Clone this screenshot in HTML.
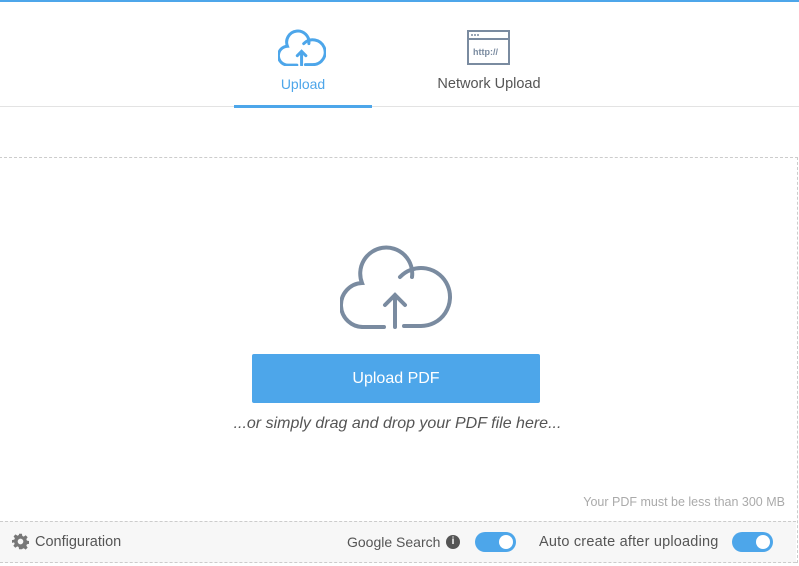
<!DOCTYPE html>
<html><head><style>
body{margin:0;width:799px;height:566px;background:#fff;font-family:"Liberation Sans",sans-serif;position:relative;overflow:hidden}
.a{position:absolute}
</style></head><body>
<div class="a" style="left:0;top:0;width:799px;height:2px;background:#4da6ea"></div>
<svg class="a" style="left:278px;top:29px" width="48" height="37" viewBox="0 0 112 86" fill="none" stroke="#4da6ea" stroke-width="7" stroke-linecap="round">
<path d="M44 84H24A22 22 0 0 1 22 40A26 26 0 1 1 72 34"/><path d="M60 34A29 29 0 1 1 81 83H64"/><path d="M55 84V52M45 62L55 52L65 62"/></svg>
<div class="a" style="left:234px;top:76px;width:138px;text-align:center;font-size:14px;color:#4da6ea">Upload</div>
<svg class="a" style="left:467px;top:30px" width="44" height="35" viewBox="0 0 44 35"><rect x="1" y="1" width="41" height="33" fill="none" stroke="#7a8ba0" stroke-width="2"/><line x1="1" y1="9" x2="42" y2="9" stroke="#7a8ba0" stroke-width="2"/><circle cx="5" cy="5" r="1" fill="#7a8ba0"/><circle cx="8" cy="5" r="1" fill="#7a8ba0"/><circle cx="11" cy="5" r="1" fill="#7a8ba0"/><text x="6" y="25" font-size="9" font-weight="bold" fill="#7a8ba0" font-family="Liberation Sans">http://</text></svg>
<div class="a" style="left:420px;top:76px;width:138px;text-align:center;font-size:14.5px;color:#555">Network Upload</div>
<div class="a" style="left:0;top:106px;width:799px;height:1px;background:#e3e3e3"></div>
<div class="a" style="left:234px;top:105px;width:138px;height:3px;background:#4da6ea"></div>
<div class="a" style="left:-1px;top:157px;width:797px;height:404px;border:1px dashed #ccc"></div>
<svg class="a" style="left:340px;top:243px" width="112" height="86" viewBox="0 0 112 86" fill="none" stroke="#7a8ba0" stroke-width="4" stroke-linecap="round">
<path d="M44 84H24A22 22 0 0 1 22 40A26 26 0 1 1 72 34"/><path d="M60 34A29 29 0 1 1 81 83H64"/><path d="M55 84V52M45 62L55 52L65 62"/></svg>
<div class="a" style="left:252px;top:354px;width:288px;height:49px;background:#4da6ea;border-radius:2px;color:#fff;font-size:16px;line-height:49px;text-align:center">Upload PDF</div>
<div class="a" style="left:0;top:415px;width:795px;text-align:center;font-size:16px;font-style:italic;color:#555">...or simply drag and drop your PDF file here...</div>
<div class="a" style="left:500px;top:495px;width:285px;text-align:right;font-size:12.5px;color:#aaa">Your PDF must be less than 300 MB</div>
<div class="a" style="left:0;top:521px;width:796px;height:40px;background:#f7f7f7;border-top:1px dashed #ccc;border-bottom:1px dashed #ccc"></div>
<svg class="a" style="left:12px;top:533px" width="17" height="17" viewBox="0 0 24 24"><path fill="#777" d="M10 1h4l.6 3.2 2 .9 2.7-1.9 2.8 2.8-1.9 2.7.9 2 3.2.6v4l-3.2.6-.9 2 1.9 2.7-2.8 2.8-2.7-1.9-2 .9L14 23h-4l-.6-3.2-2-.9-2.7 1.9-2.8-2.8 1.9-2.7-.9-2L0 14v-4l3.2-.6.9-2-1.9-2.7 2.8-2.8 2.7 1.9 2-.9zM12 8a4 4 0 1 0 0 8 4 4 0 0 0 0-8z"/></svg>
<div class="a" style="left:35px;top:534px;font-size:14.5px;color:#555">Configuration</div>
<div class="a" style="left:347px;top:534px;font-size:14px;color:#555">Google Search</div>
<div class="a" style="left:446px;top:535px;width:14px;height:14px;border-radius:50%;background:#555;color:#fff;font-size:10px;font-weight:bold;text-align:center;line-height:14px">i</div>
<div class="a" style="left:475px;top:532px;width:41px;height:20px;border-radius:10px;background:#4da6ea"><div style="position:absolute;right:3px;top:3px;width:14px;height:14px;border-radius:50%;background:#fff"></div></div>
<div class="a" style="left:539px;top:534px;font-size:14.5px;color:#555;letter-spacing:0.2px">Auto create after uploading</div>
<div class="a" style="left:732px;top:532px;width:41px;height:20px;border-radius:10px;background:#4da6ea"><div style="position:absolute;right:3px;top:3px;width:14px;height:14px;border-radius:50%;background:#fff"></div></div>
</body></html>
